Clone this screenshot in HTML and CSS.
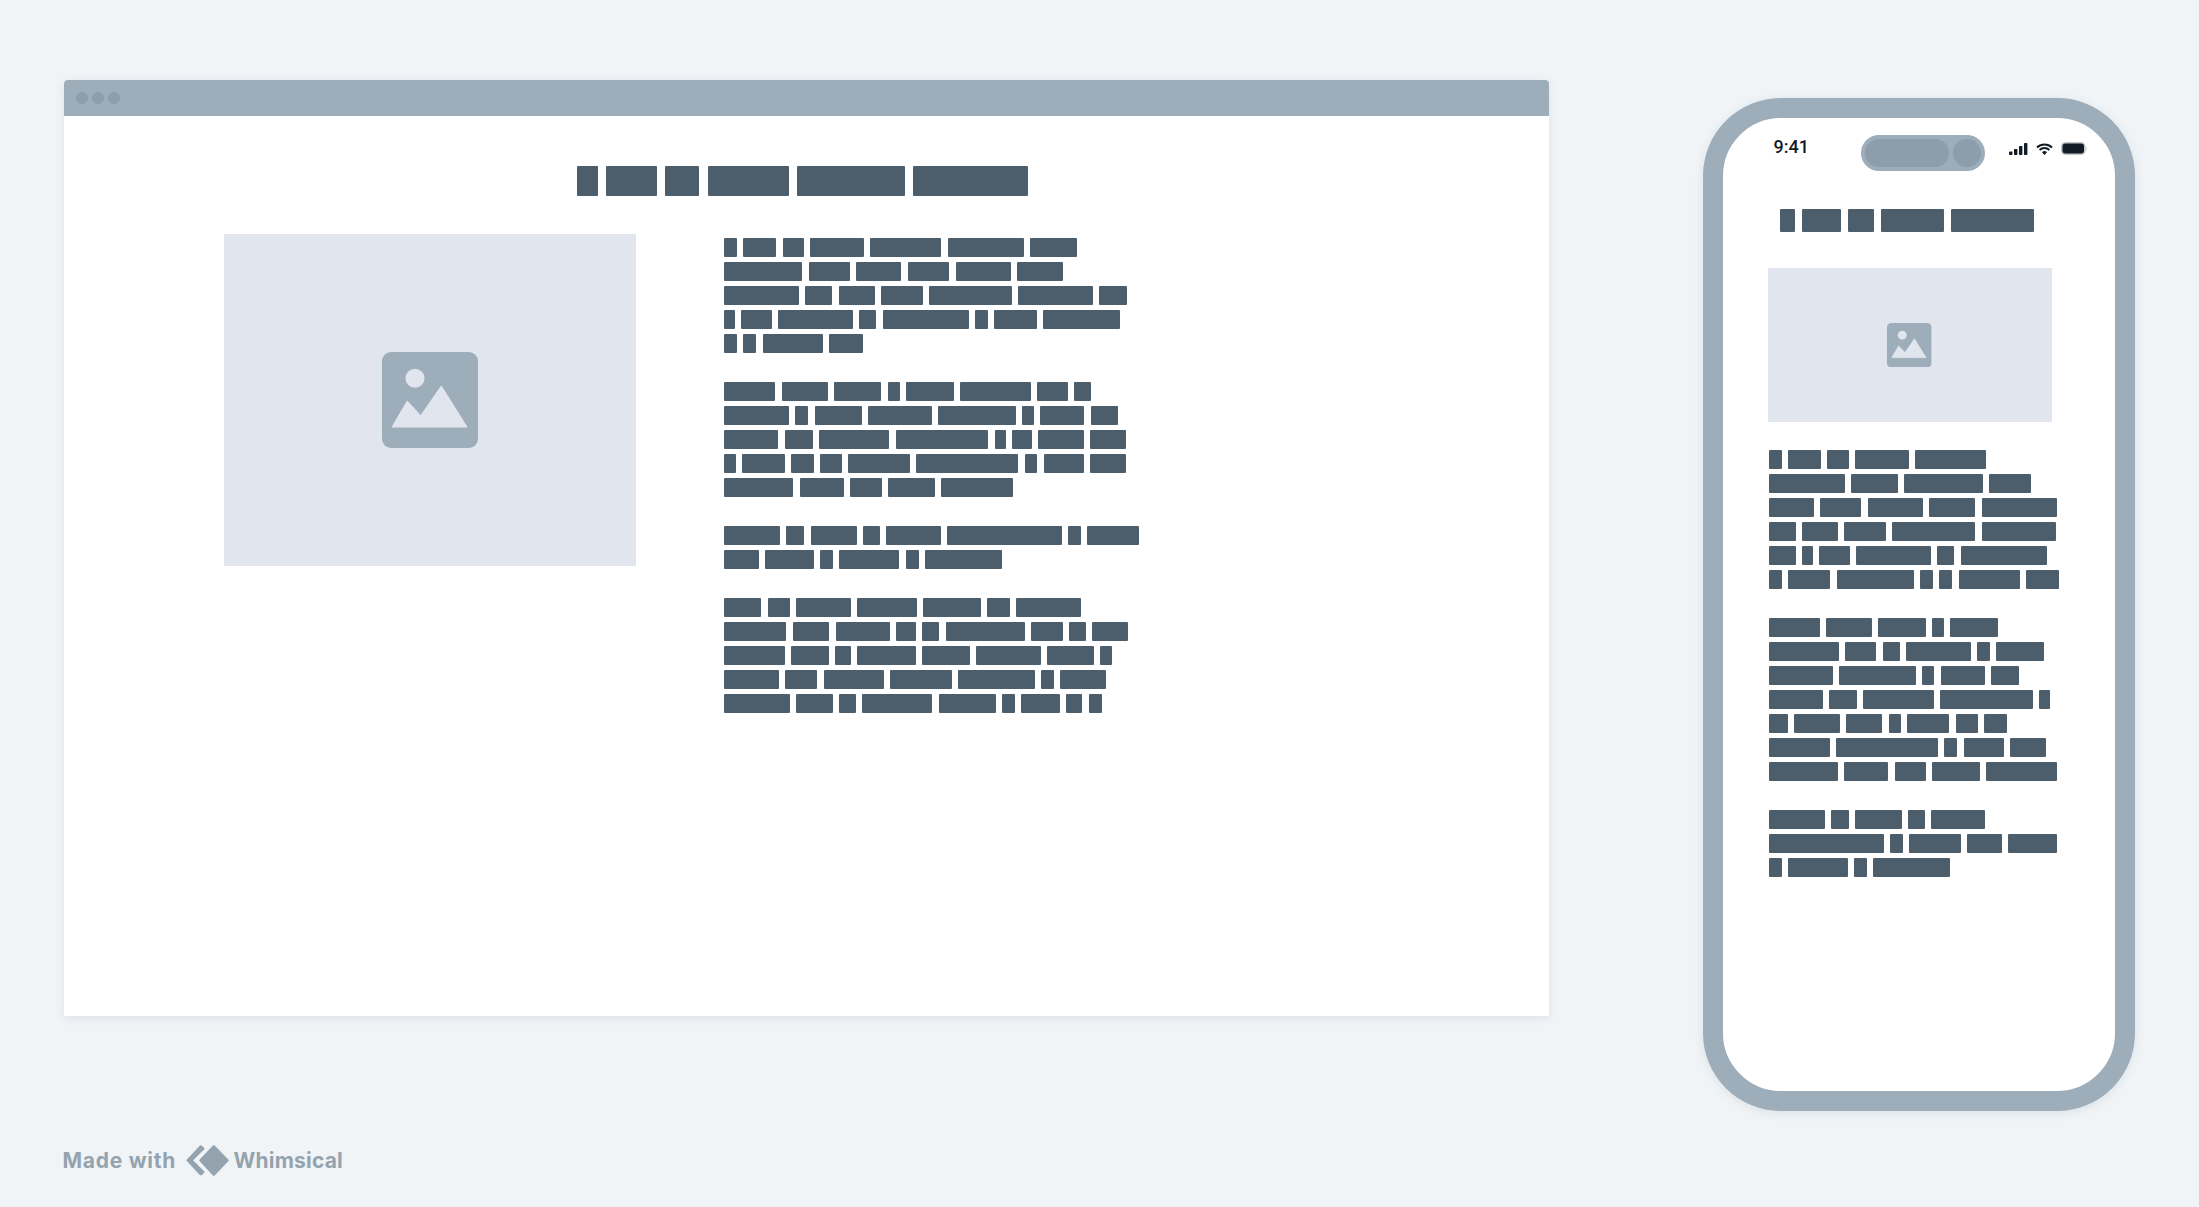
FILE: index.html
```html
<!DOCTYPE html>
<html lang="en">
<head>
  <meta charset="utf-8">
  <title>Wireframe</title>
  <link rel="stylesheet" href="styles.css">
</head>
<body>
<div class="page">
  <div class="devices">

    <!-- desktop browser -->
    <div class="browser">
      <div class="chrome"><i class="dot"></i><i class="dot"></i><i class="dot"></i></div>
      <div class="site">
        <div class="headline">
          <b style="width:21px"></b><b style="width:51px"></b><b style="width:34px"></b><b style="width:81px"></b><b style="width:108px"></b><b style="width:115px"></b>
        </div>
        <div class="columns">
          <div class="picture">
            <svg class="pic-icon big" viewBox="0 0 96 96"><rect width="96" height="96" rx="9" fill="#9eadba"/><circle cx="33" cy="26.3" r="9.5" fill="#e1e6ee"/><path d="M10 75 25.3 49 38.7 63.7 59.3 34 85 75Z" fill="#e1e6ee" stroke="#e1e6ee" stroke-width="1" stroke-linejoin="round"/></svg>
          </div>
          <div class="copy">
            <div class="para">
              <div class="row"><b style="width:13px"></b><b style="width:33px"></b><b style="width:21.7px"></b><b style="width:53.7px"></b><b style="width:71px"></b><b style="width:76px"></b><b style="width:47.3px"></b></div>
              <div class="row"><b style="width:78.3px"></b><b style="width:41.5px"></b><b style="width:45px"></b><b style="width:41.7px"></b><b style="width:55px"></b><b style="width:46.3px"></b></div>
              <div class="row"><b style="width:75px"></b><b style="width:27px"></b><b style="width:36px"></b><b style="width:42px"></b><b style="width:83px"></b><b style="width:74.7px"></b><b style="width:27.3px"></b></div>
              <div class="row"><b style="width:11px"></b><b style="width:30.3px"></b><b style="width:75.3px"></b><b style="width:17px"></b><b style="width:86.3px"></b><b style="width:13px"></b><b style="width:42.7px"></b><b style="width:77px"></b></div>
              <div class="row"><b style="width:12.7px"></b><b style="width:13.3px"></b><b style="width:60.7px"></b><b style="width:33.7px"></b></div>
            </div>
            <div class="para">
              <div class="row"><b style="width:51.3px"></b><b style="width:46.3px"></b><b style="width:47.3px"></b><b style="width:12.3px"></b><b style="width:47.7px"></b><b style="width:70.7px"></b><b style="width:31px"></b><b style="width:17px"></b></div>
              <div class="row"><b style="width:65px"></b><b style="width:13px"></b><b style="width:47.3px"></b><b style="width:64px"></b><b style="width:77.3px"></b><b style="width:12px"></b><b style="width:44.3px"></b><b style="width:27.7px"></b></div>
              <div class="row"><b style="width:54.3px"></b><b style="width:28.3px"></b><b style="width:70.3px"></b><b style="width:92.7px"></b><b style="width:11.3px"></b><b style="width:20px"></b><b style="width:45.3px"></b><b style="width:36px"></b></div>
              <div class="row"><b style="width:12px"></b><b style="width:42.3px"></b><b style="width:22.7px"></b><b style="width:22.3px"></b><b style="width:61.7px"></b><b style="width:102px"></b><b style="width:12.7px"></b><b style="width:40.3px"></b><b style="width:36.3px"></b></div>
              <div class="row"><b style="width:69.3px"></b><b style="width:44px"></b><b style="width:31.7px"></b><b style="width:47.3px"></b><b style="width:71.3px"></b></div>
            </div>
            <div class="para">
              <div class="row"><b style="width:56px"></b><b style="width:18px"></b><b style="width:46.3px"></b><b style="width:17px"></b><b style="width:54.3px"></b><b style="width:115px"></b><b style="width:13px"></b><b style="width:51.7px"></b></div>
              <div class="row"><b style="width:34.7px"></b><b style="width:49px"></b><b style="width:13px"></b><b style="width:60px"></b><b style="width:13px"></b><b style="width:76.7px"></b></div>
            </div>
            <div class="para">
              <div class="row"><b style="width:37.3px"></b><b style="width:22.3px"></b><b style="width:55px"></b><b style="width:59.3px"></b><b style="width:58px"></b><b style="width:22.7px"></b><b style="width:65px"></b></div>
              <div class="row"><b style="width:62.3px"></b><b style="width:36.7px"></b><b style="width:54px"></b><b style="width:20px"></b><b style="width:17.3px"></b><b style="width:79px"></b><b style="width:32px"></b><b style="width:17px"></b><b style="width:36px"></b></div>
              <div class="row"><b style="width:60.7px"></b><b style="width:37.7px"></b><b style="width:15.7px"></b><b style="width:59px"></b><b style="width:47.7px"></b><b style="width:65px"></b><b style="width:46.7px"></b><b style="width:12px"></b></div>
              <div class="row"><b style="width:55px"></b><b style="width:32px"></b><b style="width:60px"></b><b style="width:62px"></b><b style="width:76.7px"></b><b style="width:12.7px"></b><b style="width:46px"></b></div>
              <div class="row"><b style="width:66px"></b><b style="width:36.3px"></b><b style="width:17px"></b><b style="width:70.3px"></b><b style="width:57.3px"></b><b style="width:12.3px"></b><b style="width:39.3px"></b><b style="width:16px"></b><b style="width:13.3px"></b></div>
            </div>
          </div>
        </div>
      </div>
    </div>

    <!-- phone -->
    <div class="phone">
      <div class="status">
        <span class="time">9:41</span>
        <div class="island"><i class="pill"></i><i class="lens"></i></div>
        <div class="status-icons">
          <svg width="19" height="12" viewBox="0 0 19 12"><rect y="8.5" width="3.4" height="3.5" rx=".8"/><rect x="5" y="6" width="3.4" height="6" rx=".8"/><rect x="10" y="3" width="3.4" height="9" rx=".8"/><rect x="15" width="3.4" height="12" rx=".8"/></svg>
          <svg width="17" height="12" viewBox="0 0 17 12"><path d="M1 4.4a11 11 0 0 1 15 0M3.6 7a7.2 7.2 0 0 1 9.8 0" fill="none" stroke="#111c26" stroke-width="2"/><path d="M6 9.3a3.6 3.6 0 0 1 5 0L8.5 12Z"/></svg>
          <svg width="26" height="13" viewBox="0 0 26 13"><rect x=".75" y=".75" width="23" height="11.5" rx="3.5" fill="#111c26" stroke="#c3c7c9" stroke-width="1.5"/><path d="M24.8 4.5c.8.3 1 1.2 1 2s-.2 1.700-1 2Z" fill="#c3c7c9"/></svg>
        </div>
      </div>
      <div class="headline phone-headline">
        <b style="width:15.7px"></b><b style="width:39px"></b><b style="width:25.7px"></b><b style="width:62.7px"></b><b style="width:83.3px"></b>
      </div>
      <div class="picture phone-picture">
        <svg class="pic-icon" viewBox="0 0 96 96"><rect width="96" height="96" rx="9" fill="#9eadba"/><circle cx="33" cy="26.3" r="9.5" fill="#e1e6ee"/><path d="M10 75 25.3 49 38.7 63.7 59.3 34 85 75Z" fill="#e1e6ee" stroke="#e1e6ee" stroke-width="1" stroke-linejoin="round"/></svg>
      </div>
      <div class="copy phone-copy">
        <div class="para">
          <div class="row"><b style="width:13px"></b><b style="width:33px"></b><b style="width:21.7px"></b><b style="width:53.7px"></b><b style="width:71px"></b></div>
          <div class="row"><b style="width:76px"></b><b style="width:47.3px"></b><b style="width:78.3px"></b><b style="width:41.7px"></b></div>
          <div class="row"><b style="width:45px"></b><b style="width:41.7px"></b><b style="width:55px"></b><b style="width:46.3px"></b><b style="width:75px"></b></div>
          <div class="row"><b style="width:27px"></b><b style="width:36px"></b><b style="width:42px"></b><b style="width:83px"></b><b style="width:74.7px"></b></div>
          <div class="row"><b style="width:27.3px"></b><b style="width:11px"></b><b style="width:30.3px"></b><b style="width:75.3px"></b><b style="width:17px"></b><b style="width:86.3px"></b></div>
          <div class="row"><b style="width:13px"></b><b style="width:42.7px"></b><b style="width:77px"></b><b style="width:12.7px"></b><b style="width:13.3px"></b><b style="width:61px"></b><b style="width:33.3px"></b></div>
        </div>
        <div class="para">
          <div class="row"><b style="width:51.3px"></b><b style="width:46px"></b><b style="width:47.3px"></b><b style="width:12.3px"></b><b style="width:47.7px"></b></div>
          <div class="row"><b style="width:70.7px"></b><b style="width:31px"></b><b style="width:17px"></b><b style="width:65px"></b><b style="width:12.7px"></b><b style="width:47.3px"></b></div>
          <div class="row"><b style="width:64px"></b><b style="width:77.3px"></b><b style="width:12px"></b><b style="width:44.3px"></b><b style="width:27.7px"></b></div>
          <div class="row"><b style="width:54.3px"></b><b style="width:28px"></b><b style="width:70.3px"></b><b style="width:92.7px"></b><b style="width:11px"></b></div>
          <div class="row"><b style="width:19.7px"></b><b style="width:45.7px"></b><b style="width:36px"></b><b style="width:12.3px"></b><b style="width:42px"></b><b style="width:22.7px"></b><b style="width:22.3px"></b></div>
          <div class="row"><b style="width:61.3px"></b><b style="width:102px"></b><b style="width:13px"></b><b style="width:40px"></b><b style="width:36.3px"></b></div>
          <div class="row"><b style="width:69.7px"></b><b style="width:44px"></b><b style="width:31.3px"></b><b style="width:47.3px"></b><b style="width:71px"></b></div>
        </div>
        <div class="para">
          <div class="row"><b style="width:56.3px"></b><b style="width:18px"></b><b style="width:46.3px"></b><b style="width:17px"></b><b style="width:54.3px"></b></div>
          <div class="row"><b style="width:115px"></b><b style="width:13px"></b><b style="width:51.7px"></b><b style="width:34.7px"></b><b style="width:48.7px"></b></div>
          <div class="row"><b style="width:13px"></b><b style="width:60px"></b><b style="width:13px"></b><b style="width:76.7px"></b></div>
        </div>
      </div>
    </div>
  </div>

  <div class="credit">
    <span class="made">Made with</span>
    <svg class="logo" width="43" height="31" viewBox="0 0 128 93"><path d="M0 46 40 3Q44-1 48 3L56 11 21 46 56 81 48 89Q44 93 40 89Z" fill="#94a3ad"/><path d="M83 4 124 46 83 89 43 46Z" fill="#94a3ad" stroke="#94a3ad" stroke-width="7" stroke-linejoin="round"/></svg>
    <span>Whimsical</span>
  </div>
</div>
</body>
</html>
```

FILE: styles.css
```css
html, body { margin: 0; padding: 0; }
body { background: #f0f4f7; }

.page { width: 2199px; height: 1207px; overflow: hidden; padding: 80px 0 0 64px; box-sizing: border-box; }
.devices { display: flex; align-items: flex-start; gap: 154px; }

/* redacted text */
.row, .headline { display: flex; }
.row { gap: 6.27px; height: 19px; }
.row b, .headline b { display: block; background: #4c5d6c; border-radius: 1px; }
.copy, .para { display: flex; flex-direction: column; }
.copy { gap: 29px; }
.para { gap: 5px; }

/* browser */
.browser { width: 1485px; height: 936px; background: #fff; border-radius: 4px 4px 0 0; box-shadow: 0 2px 8px rgba(90, 110, 130, .12); }
.chrome { display: flex; align-items: center; gap: 4px; height: 36px; padding-left: 12px; background: #9eadba; border-radius: 4px 4px 0 0; }
.dot { width: 12px; height: 12px; border-radius: 50%; background: #8d9dab; }
.site { padding-top: 50px; }
.headline { justify-content: center; gap: 8.4px; height: 30px; padding-right: 8px; }
.columns { display: flex; margin-top: 38px; padding-left: 160px; gap: 88px; }
.picture { display: flex; align-items: center; justify-content: center; width: 412px; height: 332px; background: #e1e6ee; }
.pic-icon { width: 44.4px; height: 44.4px; }
.pic-icon.big { width: 96px; height: 96px; }
.copy { padding-top: 3.67px; }

/* phone */
.phone { width: 431.5px; height: 1013px; margin-top: 18px; box-sizing: border-box; border: 20px solid #9eadba; border-radius: 78px; background: #fff; box-shadow: 0 2px 10px rgba(90, 110, 130, .14); }
.status { display: flex; align-items: flex-start; height: 36px; margin-top: 17px; padding-left: 50.5px; }
.time { width: 87px; margin-top: 2px; font: 500 18px/20px Roboto, sans-serif; color: #111c26; }
.island { display: flex; gap: 4px; box-sizing: border-box; width: 124px; height: 36px; padding: 4px; border-radius: 18px; background: #9eadba; }
.pill { width: 84px; height: 28px; border-radius: 14px; background: #8d9dab; }
.lens { width: 28px; height: 28px; border-radius: 50%; background: #8d9dab; }
.status-icons { display: flex; align-items: flex-end; gap: 8px; height: 20px; margin-left: 24px; fill: #111c26; }
.phone-headline { justify-content: flex-start; gap: 7px; height: 22.5px; margin-top: 38px; padding: 0 0 0 56.8px; }
.picture.phone-picture { width: 284px; height: 154px; margin: 36.5px 0 0 44.5px; }
.phone-copy { margin: 27.5px 0 0 45.5px; padding-top: 0; }

/* footer */
.credit { display: flex; align-items: center; margin: 33.5px 0 0 -1.5px; font: 700 21px/31px Inter, sans-serif; letter-spacing: .2px; color: #94a3ad; }
.made { letter-spacing: .75px; }
.logo { margin: 0 5px 0 9.5px; }
```
